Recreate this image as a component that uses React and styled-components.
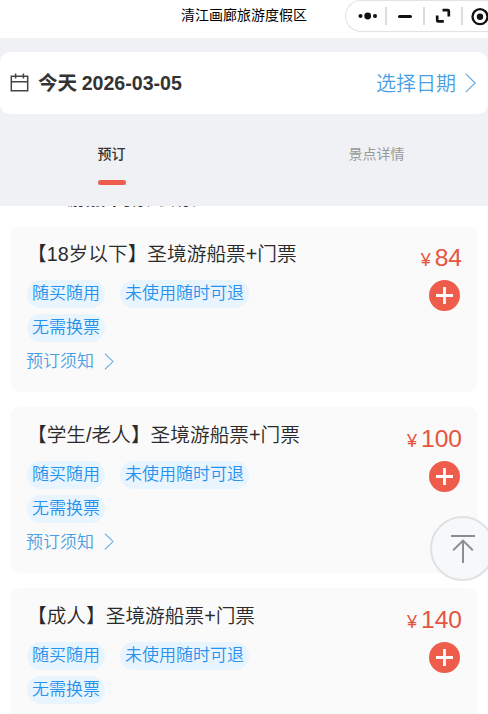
import styled, { createGlobalStyle } from 'styled-components'

const tickets = [
  { name: '【18岁以下】圣境游船票+门票', price: 84 },
  { name: '【学生/老人】圣境游船票+门票', price: 100 },
  { name: '【成人】圣境游船票+门票', price: 140 },
]

const tags = [ '随买随用', '未使用随时可退', '无需换票' ]

function App ()
{
  return (
    <Page>
      <GlobalStyle />
      <TitleBar>
        <Title>清江画廊旅游度假区</Title>
        <Capsule>
          <svg width='150' height='32' viewBox='0 0 150 32' fill='none'>
            <g fill='#111'>
              <circle cx='15.5' cy='16' r='2' />
              <circle cx='22.7' cy='16' r='3.4' />
              <circle cx='30' cy='16' r='2' />
            </g>
            <path d='M41 7v18M79 7v18M117 7v18' stroke='#d4d4d4' strokeWidth='1.6' />
            <path d='M54.5 16.5h11' stroke='#111' strokeWidth='3' strokeLinecap='round' />
            <path d='M97.5 10.2h5.3q1 0 1 1v5.4M92.2 15.4v5q0 1 1 1h5.6' stroke='#111' strokeWidth='2.7' />
            <circle cx='135' cy='16.7' r='7.5' stroke='#111' strokeWidth='2.3' />
            <circle cx='135' cy='16.7' r='3.2' fill='#111' />
          </svg>
        </Capsule>
      </TitleBar>

      <Header>
        <DateBar>
          <svg width='19' height='20' viewBox='0 0 19 20' fill='none' stroke='#444' strokeWidth='1.5'>
            <path d='M1.3 3.3h16.4v14.4H1.3zM1.3 8.7h16.4M5.6 .5v5M13.4 .5v5' />
          </svg>
          <Today>今天 2026-03-05</Today>
          <PickDate>选择日期</PickDate>
          <Chevron big />
        </DateBar>
        <Tabs>
          <Tab $active>预订</Tab>
          <Tab>景点详情</Tab>
        </Tabs>
      </Header>

      <List>
        <GroupName>游船 门票 套票</GroupName>
        { tickets.map( ( ticket ) => (
          <Card key={ ticket.name }>
            <Info>
              <Name>{ ticket.name }</Name>
              <Tags>
                { tags.map( ( tag ) => <Tag key={ tag }>{ tag }</Tag> ) }
              </Tags>
              <Notice>预订须知 <Chevron /></Notice>
            </Info>
            <Buy>
              <Price><small>¥</small>{ ticket.price }</Price>
              <AddButton>
                <svg width='17' height='17' viewBox='0 0 17 17' stroke='#fff' strokeWidth='2.8'>
                  <path d='M8.5 0v17M0 8.5h17' />
                </svg>
              </AddButton>
            </Buy>
          </Card>
        ) ) }
      </List>

      <BackTop>
        <svg width='26' height='30' viewBox='0 0 26 30' fill='none' stroke='#8b8e91' strokeWidth='2'>
          <path d='M1 2h24M13 29V7M3.2 16.2L13 6.6l9.8 9.6' />
        </svg>
      </BackTop>
    </Page>
  )
}

const Chevron = ( { big } ) => (
  <svg width={ big ? 11 : 10 } height={ big ? 20 : 17 } viewBox='0 0 10 18' fill='none' stroke='#62aae2' strokeWidth='1.1'>
    <path d='M.7.7L9.2 9L.7 17.3' />
  </svg>
)

const GlobalStyle = createGlobalStyle`
  body {
    margin: 0;
    overflow: hidden;
    background: #fff;
    font-family: 'Liberation Sans', 'Noto Sans CJK SC', sans-serif;
  }
  svg {
    display: block;
    flex: none;
  }
`

const Page = styled.div`
  position: relative;
  width: 488px;
  height: 714px;
  overflow: hidden;
`

const TitleBar = styled.div`
  display: flex;
  justify-content: flex-end;
  height: 38px;
`

const Title = styled.div`
  width: 164px;
  line-height: 30px;
  font-size: 14px;
  color: #000;
  white-space: nowrap;
`

const Capsule = styled.div`
  box-sizing: border-box;
  width: 143px;
  height: 32px;
  border: 1px solid #e3e3e3;
  border-right: 0;
  border-radius: 16px 0 0 16px;
  overflow: hidden;

  svg {
    margin: -1px 0 0 -1px;
  }
`

const Header = styled.div`
  height: 154px;
  padding-top: 14px;
  background: #f0f1f5;
`

const DateBar = styled.div`
  box-sizing: border-box;
  display: flex;
  align-items: center;
  height: 62px;
  padding: 0 12px 0 10px;
  border-radius: 10px;
  background: #fff;
`

const Today = styled.div`
  flex: 1;
  margin-left: 9px;
  padding-bottom: 4px;
  font-size: 19.6px;
  font-weight: 700;
  word-spacing: -1px;
  color: #333;
`

const PickDate = styled.div`
  margin-right: 9px;
  padding-bottom: 2px;
  font-size: 20px;
  font-weight: 350;
  color: #4a9fe4;
`

const Tabs = styled.div`
  display: flex;
  justify-content: center;
  padding: 30px 0 0;
`

const Tab = styled.div`
  display: flex;
  flex: none;
  flex-direction: column;
  align-items: center;
  width: 265px;
  font-size: 14px;
  line-height: 20px;
  font-weight: ${ ( { $active } ) => $active ? 500 : 400 };
  color: ${ ( { $active } ) => $active ? '#333' : '#999' };

  &::after {
    content: '';
    width: 28px;
    height: 5px;
    margin-top: 16px;
    border-radius: 3px;
    background: ${ ( { $active } ) => $active ? '#ee5d4b' : 'transparent' };
  }
`

const List = styled.div`
  display: flex;
  flex-direction: column;
  gap: 15px;
  padding: 0 10px;
`

// heading scrolled under the tabs, only the feet of its glyphs show
const GroupName = styled.div`
  display: flex;
  align-items: flex-end;
  height: 4px;
  margin-bottom: 1px;
  padding-left: 56px;
  overflow: hidden;
  font-size: 20px;
  line-height: 24px;
  font-weight: 700;
  color: #333;
`

const Card = styled.div`
  box-sizing: border-box;
  display: flex;
  justify-content: space-between;
  height: 165.8px;
  padding: 14px 16px 0;
  border-radius: 10px;
  background: #fafafa;
`

const Info = styled.div`
  width: 290px;
`

const Name = styled.div`
  padding-left: 1px;
  font-size: 19.7px;
  line-height: 29px;
  font-weight: 350;
  color: #2a2a2a;
  white-space: nowrap;
`

const Tags = styled.div`
  display: flex;
  flex-wrap: wrap;
  gap: 6px 15px;
  width: 240px;
  margin: 11px 0 0 1px;
`

const Tag = styled.div`
  padding: 0 5px;
  border-radius: 14px;
  background: #e8f4fe;
  font-size: 17px;
  line-height: 28px;
  font-weight: 350;
  color: #2492ee;
  white-space: nowrap;
`

const Notice = styled.div`
  display: flex;
  align-items: center;
  gap: 10px;
  margin-top: 7px;
  font-size: 17px;
  line-height: 26px;
  font-weight: 350;
  color: #4a9fe4;

  svg {
    margin-bottom: 2px;
  }
`

const Buy = styled.div`
  display: flex;
  flex-direction: column;
  align-items: flex-end;
`

const Price = styled.div`
  padding-top: 3px;
  font-size: 24.6px;
  line-height: 29px;
  color: #e65540;

  small {
    margin-right: 4px;
    font-size: 18px;
  }
`

const AddButton = styled.button`
  display: flex;
  align-items: center;
  justify-content: center;
  width: 31px;
  height: 31px;
  margin: 5px 2.5px 0 0;
  padding: 0;
  border: 0;
  border-radius: 50%;
  background: #ee5d4b;
`

const BackTop = styled.div`
  box-sizing: border-box;
  position: absolute;
  top: 516px;
  left: 430px;
  display: flex;
  align-items: center;
  justify-content: center;
  width: 65px;
  height: 65px;
  border: 2px solid #dfe1e3;
  border-radius: 50%;
  background: #f6f8fa;
`

export default App
